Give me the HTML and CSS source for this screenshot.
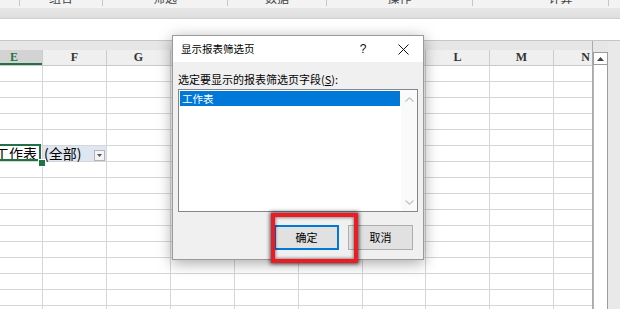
FILE: index.html
```html
<!DOCTYPE html>
<html lang="zh-CN">
<head>
<meta charset="utf-8">
<title>显示报表筛选页</title>
<link rel="stylesheet" href="styles.css">
</head>
<body>
<div class="app">
  <div class="ribbon">
    <div class="grp w0"></div>
    <div class="grp w1"><span class="glabel">组合</span></div>
    <div class="grp w2"><span class="glabel">筛选</span></div>
    <div class="grp w3"><span class="glabel">数据</span></div>
    <div class="grp w4"><span class="glabel">操作</span></div>
    <div class="grp w5"><span class="glabel">计算</span></div>
    <div class="grp w6"></div>
  </div>
  <div class="band"></div>
  <div class="formula"></div>
  <div class="sheet">
    <div class="grid">
      <div class="topgap"></div>
      <div class="hrow">
        <div class="hc ce hsel">E</div>
        <div class="hc cw">F</div>
        <div class="hc cw">G</div>
        <div class="hc cw"></div>
        <div class="hc cw"></div>
        <div class="hc cw"></div>
        <div class="hc ck"></div>
        <div class="hc cw">L</div>
        <div class="hc cw">M</div>
        <div class="hc cw">N</div>
      </div>
      <div class="row"><div class="c ce"></div><div class="c cw"></div><div class="c cw"></div><div class="c cw"></div><div class="c cw"></div><div class="c cw"></div><div class="c ck"></div><div class="c cw"></div><div class="c cw"></div><div class="c cw"></div></div>
      <div class="row"><div class="c ce"></div><div class="c cw"></div><div class="c cw"></div><div class="c cw"></div><div class="c cw"></div><div class="c cw"></div><div class="c ck"></div><div class="c cw"></div><div class="c cw"></div><div class="c cw"></div></div>
      <div class="row"><div class="c ce"></div><div class="c cw"></div><div class="c cw"></div><div class="c cw"></div><div class="c cw"></div><div class="c cw"></div><div class="c ck"></div><div class="c cw"></div><div class="c cw"></div><div class="c cw"></div></div>
      <div class="row"><div class="c ce"></div><div class="c cw"></div><div class="c cw"></div><div class="c cw"></div><div class="c cw"></div><div class="c cw"></div><div class="c ck"></div><div class="c cw"></div><div class="c cw"></div><div class="c cw"></div></div>
      <div class="row"><div class="c ce"></div><div class="c cw"></div><div class="c cw"></div><div class="c cw"></div><div class="c cw"></div><div class="c cw"></div><div class="c ck"></div><div class="c cw"></div><div class="c cw"></div><div class="c cw"></div></div>
      <div class="row">
        <div class="c ce csel"><span class="ctext">工作表</span></div>
        <div class="c cw cfilter"><span class="ctext">(全部)</span><span class="dd"><svg width="5" height="3" viewBox="0 0 5 3"><path d="M0 0H5L2.5 3Z" fill="#555"/></svg></span></div>
        <div class="c cw"></div><div class="c cw"></div><div class="c cw"></div><div class="c cw"></div><div class="c ck"></div><div class="c cw"></div><div class="c cw"></div><div class="c cw"></div>
      </div>
      <div class="row"><div class="c ce"></div><div class="c cw"></div><div class="c cw"></div><div class="c cw"></div><div class="c cw"></div><div class="c cw"></div><div class="c ck"></div><div class="c cw"></div><div class="c cw"></div><div class="c cw"></div></div>
      <div class="row"><div class="c ce"></div><div class="c cw"></div><div class="c cw"></div><div class="c cw"></div><div class="c cw"></div><div class="c cw"></div><div class="c ck"></div><div class="c cw"></div><div class="c cw"></div><div class="c cw"></div></div>
      <div class="row"><div class="c ce"></div><div class="c cw"></div><div class="c cw"></div><div class="c cw"></div><div class="c cw"></div><div class="c cw"></div><div class="c ck"></div><div class="c cw"></div><div class="c cw"></div><div class="c cw"></div></div>
      <div class="row"><div class="c ce"></div><div class="c cw"></div><div class="c cw"></div><div class="c cw"></div><div class="c cw"></div><div class="c cw"></div><div class="c ck"></div><div class="c cw"></div><div class="c cw"></div><div class="c cw"></div></div>
      <div class="row"><div class="c ce"></div><div class="c cw"></div><div class="c cw"></div><div class="c cw"></div><div class="c cw"></div><div class="c cw"></div><div class="c ck"></div><div class="c cw"></div><div class="c cw"></div><div class="c cw"></div></div>
      <div class="row"><div class="c ce"></div><div class="c cw"></div><div class="c cw"></div><div class="c cw"></div><div class="c cw"></div><div class="c cw"></div><div class="c ck"></div><div class="c cw"></div><div class="c cw"></div><div class="c cw"></div></div>
      <div class="row"><div class="c ce"></div><div class="c cw"></div><div class="c cw"></div><div class="c cw"></div><div class="c cw"></div><div class="c cw"></div><div class="c ck"></div><div class="c cw"></div><div class="c cw"></div><div class="c cw"></div></div>
      <div class="row"><div class="c ce"></div><div class="c cw"></div><div class="c cw"></div><div class="c cw"></div><div class="c cw"></div><div class="c cw"></div><div class="c ck"></div><div class="c cw"></div><div class="c cw"></div><div class="c cw"></div></div>
      <div class="row"><div class="c ce"></div><div class="c cw"></div><div class="c cw"></div><div class="c cw"></div><div class="c cw"></div><div class="c cw"></div><div class="c ck"></div><div class="c cw"></div><div class="c cw"></div><div class="c cw"></div></div>
      <div class="row"><div class="c ce"></div><div class="c cw"></div><div class="c cw"></div><div class="c cw"></div><div class="c cw"></div><div class="c cw"></div><div class="c ck"></div><div class="c cw"></div><div class="c cw"></div><div class="c cw"></div></div>
    </div>
    <div class="vscroll">
      <div class="vs-top"></div>
      <div class="vs-btn"><svg width="7" height="4" viewBox="0 0 7 4"><path d="M0 4H7L3.5 0Z" fill="#444"/></svg></div>
      <div class="vs-track"></div>
    </div>
    <div class="filler"></div>
  </div>

  <div class="dialog">
    <div class="titlebar">
      <span class="title">显示报表筛选页</span>
      <span class="help">?</span>
      <span class="close"><svg width="11" height="11" viewBox="0 0 11 11"><path d="M0.5 0.5L10.5 10.5M10.5 0.5L0.5 10.5" stroke="#111" stroke-width="1"/></svg></span>
    </div>
    <div class="dbody">
      <div class="dlabel">选定要显示的报表筛选页字段(<u>S</u>):</div>
      <div class="listbox">
        <div class="items">
          <div class="item selected">工作表</div>
        </div>
        <div class="lscroll">
          <svg class="arrow" width="9" height="5" viewBox="0 0 9 5"><path d="M0.5 4.5L4.5 0.8L8.5 4.5" fill="none" stroke="#c2c2c2" stroke-width="1.2"/></svg>
          <svg class="arrow" width="9" height="5" viewBox="0 0 9 5"><path d="M0.5 0.5L4.5 4.2L8.5 0.5" fill="none" stroke="#c2c2c2" stroke-width="1.2"/></svg>
        </div>
      </div>
      <div class="buttons">
        <div class="btn default">确定</div>
        <div class="btn">取消</div>
      </div>
    </div>
  </div>
  <div class="redbox"></div>
</div>
</body>
</html>
```

FILE: styles.css
```css
* { box-sizing: border-box; margin: 0; padding: 0; }
html, body { width: 620px; height: 309px; overflow: hidden; background: #fff; }
body { font-family: "Noto Sans CJK SC", "Noto Sans", sans-serif; color: #000; }
.app { position: relative; width: 620px; height: 309px; overflow: hidden; }

/* ribbon */
.ribbon { display: flex; height: 8px; background: #f3f3f3; overflow: hidden; }
.grp { flex: none; height: 6px; border-right: 1px solid #c6c6c6; display: flex; justify-content: center; overflow: visible; }
.w0 { width: 20px; }
.w1 { width: 83px; }
.w2 { width: 125px; }
.w3 { width: 99px; }
.w4 { width: 146px; }
.w5 { width: 136px; padding-left: 40px; }
.w6 { flex: 1; border-right: none; }
.glabel { font-size: 12px; line-height: 12px; margin-top: -8px; color: #444; white-space: nowrap; }

.band { height: 11px; background: linear-gradient(#e7e7e7, #dedede); border-bottom: 1px solid #cfcfcf; }
.formula { height: 22px; background: #fff; border-bottom: 1px solid #c6c6c6; }

/* sheet */
.sheet { display: flex; height: 268px; }
.grid { flex: none; width: 593px; overflow: hidden; border-right: 1px solid #ababab; background: #fff; }
.topgap { height: 9px; background: #e6e6e6; width: 700px; }
.hrow { display: flex; height: 16px; background: #efefef; border-bottom: 1px solid #c9c9c9; width: 700px; }
.row { display: flex; height: 16px; border-bottom: 1px solid #d6d6d6; width: 700px; }
.hc, .c { flex: none; height: 100%; border-right: 1px solid #d6d6d6; }
.hc { border-right-color: #cdcdcd; font-family: "Liberation Serif", "DejaVu Serif", serif; font-weight: bold; font-size: 12px; line-height: 15px; text-align: center; color: #333; }
.ce { width: 43px; }
.cw { width: 64px; }
.ck { width: 63px; }
.hsel { background: #d3d3d3; color: #217346; padding-right: 14px; box-shadow: inset 0 -2px 0 #217346; }

.c { font-size: 14px; line-height: 15px; display: flex; overflow: visible; }
.ctext { white-space: nowrap; }
.csel { position: relative; justify-content: flex-end; padding-right: 5px; }
.csel::after { content: ""; position: absolute; left: -3px; top: -2px; right: 1px; bottom: 0; border: 2px solid #217346; }
.csel::before { content: ""; position: absolute; left: 38px; top: 13px; width: 6px; height: 6px; background: #217346; border: 1px solid #fff; z-index: 2; }
.cfilter { background: #dde6f1; justify-content: space-between; padding-left: 1px; padding-right: 1px; }
.dd { align-self: flex-end; width: 11px; height: 11px; background: #f4f4f4; border: 1px solid #b4b4b4; display: flex; align-items: center; justify-content: center; }

.vscroll { flex: none; width: 15px; display: flex; flex-direction: column; }
.vs-top { height: 11px; background: #e6e6e6; }
.vs-btn { height: 13px; border: 1px solid #9c9c9c; background: #fff; display: flex; align-items: center; justify-content: center; }
.vs-track { flex: 1; border-left: 1px solid #b4b4b4; border-right: 1px solid #9c9c9c; background: #fff; }
.filler { flex: 1; background: #e9e9e9; }

/* dialog */
.dialog { position: absolute; left: 172px; top: 35px; width: 252px; height: 225px; border: 1px solid #9a9a9a; background: #f0f0f0; box-shadow: 0 3px 14px rgba(0,0,0,0.35); display: flex; flex-direction: column; }
.titlebar { height: 26px; background: #fff; display: flex; align-items: center; }
.title { flex: 1; padding-left: 8px; font-size: 10.5px; line-height: 26px; color: #000; }
.help { width: 30px; text-align: center; font-family: "Liberation Sans", "DejaVu Sans", sans-serif; font-size: 12px; line-height: 26px; color: #111; margin-right: 6px; }
.close { width: 39px; height: 26px; display: flex; align-items: center; justify-content: center; }
.dbody { flex: 1; padding: 9px 5px 8px 5px; display: flex; flex-direction: column; }
.dlabel { font-size: 11px; line-height: 16px; height: 16px; white-space: nowrap; }
.dlabel u { text-underline-offset: 1px; }
.listbox { margin-top: 2px; height: 123px; border: 1px solid #828790; background: #fff; display: flex; }
.items { flex: 1; padding: 1px; }
.item { height: 15px; font-size: 10.5px; line-height: 15px; padding-left: 2px; }
.selected { background: #0078d7; color: #fff; }
.lscroll { width: 16px; background: #fafafa; display: flex; flex-direction: column; justify-content: space-between; align-items: center; padding: 7px 0 6px 0; }
.buttons { margin-top: 13px; display: flex; justify-content: flex-end; gap: 9px; padding-right: 5px; }
.btn { width: 65px; height: 25px; border: 1px solid #adadad; background: #e1e1e1; font-size: 11px; line-height: 23px; text-align: center; }
.btn.default { border: 2px solid #0078d7; line-height: 21px; }

/* red highlight */
.redbox { position: absolute; left: 271px; top: 213px; width: 87px; height: 50px; border: 4px solid #ec1c24; box-shadow: 0 0 4px 1px rgba(0,0,0,0.7), inset 0 0 3px 1px rgba(0,0,0,0.4); }
```
